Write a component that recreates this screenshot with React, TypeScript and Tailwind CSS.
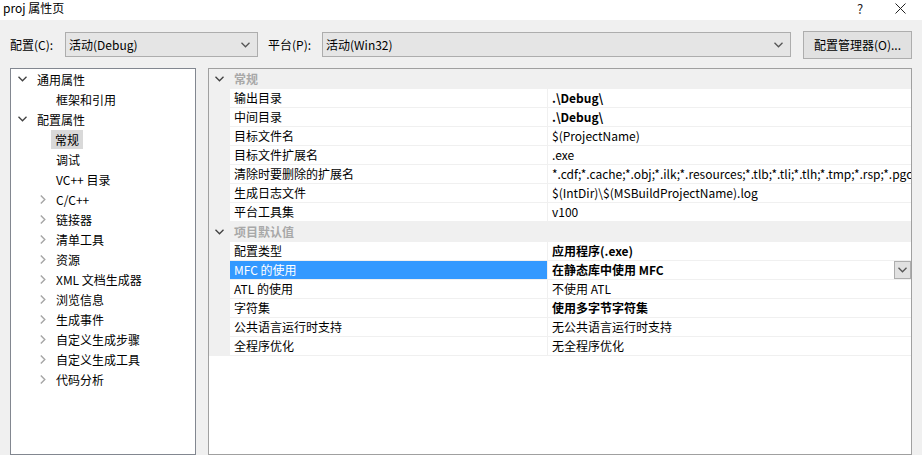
import React from 'react';

const FONT = "font-['Noto_Sans_CJK_SC','Noto_Sans',sans-serif]";

const TREE = [
    { label: '通用属性', level: 0, open: true },
    { label: '框架和引用', level: 1 },
    { label: '配置属性', level: 0, open: true },
    { label: '常规', level: 1, selected: true },
    { label: '调试', level: 1 },
    { label: 'VC++ 目录', level: 1 },
    { label: 'C/C++', level: 1, closed: true },
    { label: '链接器', level: 1, closed: true },
    { label: '清单工具', level: 1, closed: true },
    { label: '资源', level: 1, closed: true },
    { label: 'XML 文档生成器', level: 1, closed: true },
    { label: '浏览信息', level: 1, closed: true },
    { label: '生成事件', level: 1, closed: true },
    { label: '自定义生成步骤', level: 1, closed: true },
    { label: '自定义生成工具', level: 1, closed: true },
    { label: '代码分析', level: 1, closed: true },
];

type Row = { name: string; value: string; bold?: boolean; selected?: boolean };

const GROUPS: { title: string; rows: Row[] }[] = [
    {
        title: '常规',
        rows: [
            { name: '输出目录', value: '.\\Debug\\', bold: true },
            { name: '中间目录', value: '.\\Debug\\', bold: true },
            { name: '目标文件名', value: '$(ProjectName)' },
            { name: '目标文件扩展名', value: '.exe' },
            { name: '清除时要删除的扩展名', value: '*.cdf;*.cache;*.obj;*.ilk;*.resources;*.tlb;*.tli;*.tlh;*.tmp;*.rsp;*.pgc;*.pgd;*.meta' },
            { name: '生成日志文件', value: '$(IntDir)\\$(MSBuildProjectName).log' },
            { name: '平台工具集', value: 'v100' },
        ],
    },
    {
        title: '项目默认值',
        rows: [
            { name: '配置类型', value: '应用程序(.exe)', bold: true },
            { name: 'MFC 的使用', value: '在静态库中使用 MFC', bold: true, selected: true },
            { name: 'ATL 的使用', value: '不使用 ATL' },
            { name: '字符集', value: '使用多字节字符集', bold: true },
            { name: '公共语言运行时支持', value: '无公共语言运行时支持' },
            { name: '全程序优化', value: '无全程序优化' },
        ],
    },
];

const ChevronDown = ({ className }: { className?: string }) => (
    <svg width="9" height="6" viewBox="0 0 9 6" className={className}>
        <path d="M0.5 0.8 L4.5 4.8 L8.5 0.8" fill="none" stroke="currentColor" strokeWidth="1.3" />
    </svg>
);

const ChevronRight = () => (
    <svg width="6" height="9" viewBox="0 0 6 9" className="text-[#a6a6a6]">
        <path d="M0.8 0.5 L4.8 4.5 L0.8 8.5" fill="none" stroke="currentColor" strokeWidth="1.4" />
    </svg>
);

const Combo = ({ text, width }: { text: string; width: string }) => (
    <div className={`${width} h-[25px] border border-[#adadad] bg-[#e5e5e5] flex items-center justify-between pl-[3px] pr-[7px]`}>
        <span className="text-[12px] text-black">{text}</span>
        <ChevronDown className="text-[#555]" />
    </div>
);

export default function App() {
    return (
        <div className={`w-[922px] h-[455px] overflow-hidden bg-[#f0f0f0] flex flex-col ${FONT} text-[12px] text-black`}>
            {/* title bar */}
            <div className="h-[20px] bg-white flex items-start shrink-0">
                <span className="pl-[3px] leading-[16px] text-[12px]">proj 属性页</span>
                <div className="flex-1" />
                <span className="w-[20px] leading-[18px] text-[13px] text-[#222] text-center mr-[25px]">?</span>
                <svg width="11" height="11" viewBox="0 0 11 11" className="mt-[3px] mr-[16px]">
                    <path d="M0.5 0.5 L10.5 10.5 M10.5 0.5 L0.5 10.5" stroke="#222" strokeWidth="1" />
                </svg>
            </div>

            {/* toolbar */}
            <div className="h-[48px] shrink-0 flex items-center pl-[10px] pt-[1px]">
                <span className="w-[55px]">配置(C):</span>
                <Combo text="活动(Debug)" width="w-[193px]" />
                <span className="ml-[10px] w-[54px]">平台(P):</span>
                <Combo text="活动(Win32)" width="w-[469px]" />
                <div className="ml-[12px] w-[109px] h-[28px] border border-[#adadad] bg-[#e1e1e1] flex items-center justify-center">
                    配置管理器(O)...
                </div>
            </div>

            {/* main */}
            <div className="flex-1 flex min-h-0">
                {/* tree */}
                <div className="ml-[10px] w-[186px] border border-[#828790] bg-white flex flex-col">
                    {TREE.map((t, i) => (
                        <div key={i} className="h-[20px] flex items-center">
                            <div className={`${t.level === 0 ? 'w-[25px]' : 'w-[44px]'} flex items-center justify-end pr-[9px]`}>
                                {t.open && <ChevronDown className="text-[#404040]" />}
                                {t.closed && <ChevronRight />}
                            </div>
                            <span className={`leading-[19px] px-[1px] ${t.selected ? 'bg-[#d9d9d9] ml-[-4px] px-[4px]' : ''}`}>{t.label}</span>
                        </div>
                    ))}
                </div>

                {/* property grid */}
                <div className="ml-[12px] w-[704px] border border-[#a0a0a0] bg-white flex flex-col">
                    {GROUPS.map((g, gi) => (
                        <div key={gi} className="flex flex-col">
                            <div className="h-[20px] bg-[#f0f0f0] flex items-center">
                                <div className="w-[21px] flex justify-center">
                                    <ChevronDown className="text-[#404040]" />
                                </div>
                                <span className="pl-[4px] font-bold text-[#a8a8a8]">{g.title}</span>
                            </div>
                            {g.rows.map((r, ri) => (
                                <div key={ri} className="h-[19px] flex bg-[#f0f0f0]">
                                    <div className="w-[21px] shrink-0" />
                                    <div className={`w-[318px] shrink-0 border-b border-r border-[#f0f0f0] pl-[4px] flex items-center ${r.selected ? 'bg-[#3399ff] text-white' : 'bg-white'}`}>
                                        {r.name}
                                    </div>
                                    <div className="flex-1 min-w-0 bg-white border-b border-[#f0f0f0] pl-[4px] flex items-center overflow-hidden">
                                        <span className={`whitespace-nowrap flex-1 ${r.bold ? 'font-bold' : ''}`}>{r.value}</span>
                                        {r.selected && (
                                            <div className="w-[17px] h-[18px] shrink-0 border border-[#adadad] bg-[#e1e1e1] flex items-center justify-center">
                                                <ChevronDown className="text-[#555]" />
                                            </div>
                                        )}
                                    </div>
                                </div>
                            ))}
                        </div>
                    ))}
                </div>
            </div>
        </div>
    );
}
